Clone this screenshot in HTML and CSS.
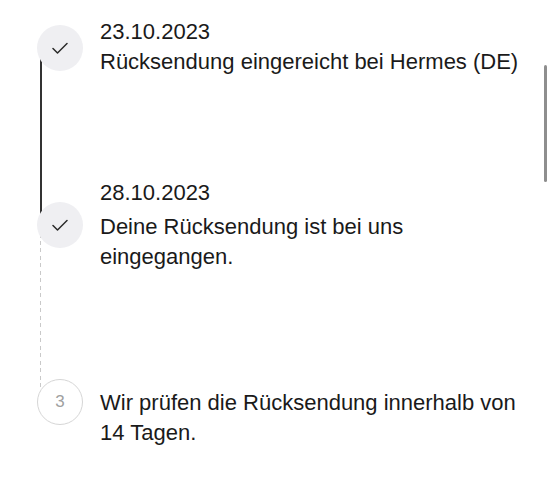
FILE: index.html
```html
<!DOCTYPE html>
<html>
<head>
    <meta charset="UTF-8">
    <meta name="viewport" content="width=device-width, initial-scale=1.0">
    <title>Rücksendung</title>
    <link rel="stylesheet" href="styles.css">
</head>
<body>
    <div class="timeline">
        <div class="step step-first done">
            <div class="marker">
                <svg width="16" height="12" viewBox="0 0 16 12"><path d="M1 6.5 L5.5 11 L15 1.5" /></svg>
            </div>
            <div class="text">
                <div class="date">23.10.2023</div>
                <div>Rücksendung eingereicht bei Hermes (DE)</div>
            </div>
        </div>

        <div class="step step-second done">
            <div class="marker">
                <svg width="16" height="12" viewBox="0 0 16 12"><path d="M1 6.5 L5.5 11 L15 1.5" /></svg>
            </div>
            <div class="text">
                <div class="date">28.10.2023</div>
                <div>Deine Rücksendung ist bei uns eingegangen.</div>
            </div>
        </div>

        <div class="step step-third">
            <div class="marker">3</div>
            <div class="text">
                <div>Wir prüfen die Rücksendung innerhalb von 14 Tagen.</div>
            </div>
        </div>
    </div>

    <div class="scrollbar"></div>
</body>
</html>
```

FILE: styles.css
```css
body {
    margin: 0;
    background: #fff;
    font-family: "Liberation Sans", Arial, sans-serif;
    color: #1a1a1a;
    height: 480px;
    overflow: hidden;
}
.timeline {
    padding: 17px 28px 0 37px;
}
.step {
    display: grid;
    grid-template-columns: 46px 1fr;
    column-gap: 17px;
    align-items: start;
    position: relative;
}
.marker {
    width: 46px;
    height: 46px;
    border-radius: 50%;
    background: #efeff2;
    display: flex;
    justify-content: center;
    align-items: center;
    position: relative;
    z-index: 1;
}
.marker path {
    fill: none;
    stroke: #2a2a2a;
    stroke-width: 1.5;
    stroke-linecap: round;
    stroke-linejoin: round;
}
.text {
    font-size: 22px;
    line-height: 30px;
}

/* Verbindungslinien */
.step::before {
    content: "";
    position: absolute;
    left: 3px;
    width: 1.5px;
}
.step-first {
    margin-bottom: 101px;
}
.step-first .marker {
    margin-top: 8px;
}
.step-first::before {
    top: 31px;
    height: 178px;
    background: #333;
}
.step-second {
    margin-bottom: 107px;
}
.step-second .marker {
    margin-top: 24px;
}
.step-second .date {
    margin-bottom: 4px;
}
.step-second::before {
    top: 48px;
    height: 177px;
    width: 1px;
    background: repeating-linear-gradient(to bottom, #c9c9c9 0, #c9c9c9 4px, transparent 4px, transparent 7.5px);
}
.step-third .marker {
    background: #fff;
    border: 1.5px solid #d6d6d6;
    box-sizing: border-box;
    color: #a0a0a0;
    font-size: 17px;
}
.step-third .text {
    margin-top: 9px;
}
.step-third::before {
    display: none;
}
.scrollbar {
    position: absolute;
    top: 65px;
    right: 4px;
    width: 3px;
    height: 117px;
    border-radius: 2px;
    background: #8e8e8e;
}
```
